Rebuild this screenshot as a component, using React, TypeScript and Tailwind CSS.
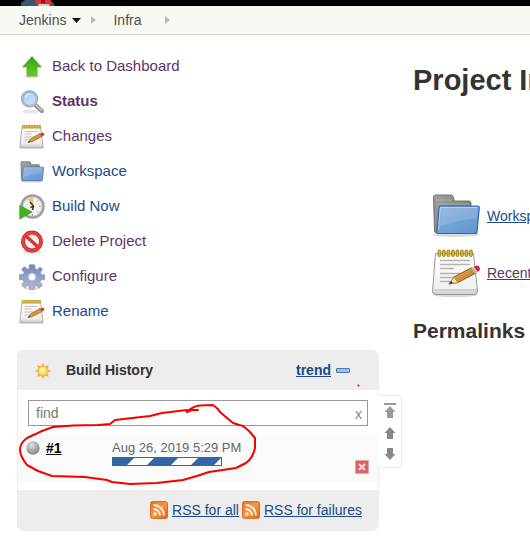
import type { ReactNode } from "react";

function ArrowUpIcon() {
  return (
    <svg viewBox="0 0 24 24" className="size-6" aria-hidden="true">
      <defs>
        <linearGradient id="green" x1="0" y1="0" x2="0" y2="1">
          <stop offset="0" stopColor="#3f9c12" />
          <stop offset="1" stopColor="#62d022" />
        </linearGradient>
      </defs>
      <ellipse cx="12" cy="21.5" rx="8" ry="1.6" fill="#000" opacity=".13" />
      <path d="M12 1.5 21.3 12H17v9H7v-9H2.7z" fill="url(#green)" stroke="#57a832" strokeWidth=".8" />
    </svg>
  );
}

function SearchIcon() {
  return (
    <svg viewBox="0 0 24 24" className="size-6" aria-hidden="true">
      <defs>
        <linearGradient id="glass" x1="0" y1="0" x2="1" y2="1">
          <stop offset="0" stopColor="#9fc4ee" />
          <stop offset="1" stopColor="#dcecfb" />
        </linearGradient>
      </defs>
      <ellipse cx="11" cy="21.5" rx="9" ry="2" fill="#000" opacity=".09" />
      <path d="m15.5 15 6.300 6" stroke="#8a8a8a" strokeWidth="4" strokeLinecap="round" />
      <path d="m15.5 14.500 6 5.800" stroke="#c9c9c9" strokeWidth="1.6" strokeLinecap="round" />
      <circle cx="9.500" cy="8.800" r="8" fill="url(#glass)" stroke="#a9abae" strokeWidth="1.400" />
      <circle cx="9.500" cy="8.800" r="6.600" fill="none" stroke="#7fa9dc" strokeWidth=".8" />
      <path d="M5.500 8.500c0-3 2-4.500 5-4.300" fill="none" stroke="#fff" strokeWidth="1.200" opacity=".6" />
    </svg>
  );
}

function SmallNotepadIcon() {
  return (
    <svg viewBox="0 0 26 26" className="size-[26px]" aria-hidden="true">
      <defs>
        <linearGradient id="smallPaper" x1="0" y1="0" x2="0" y2="1">
          <stop offset="0" stopColor="#fbfbfa" />
          <stop offset=".8" stopColor="#eeeeec" />
          <stop offset="1" stopColor="#bdbdbb" />
        </linearGradient>
      </defs>
      <path d="M3 3h18.500L24 21.500V24H1v-2.500z" fill="url(#smallPaper)" stroke="#a9a9a6" strokeWidth=".9" />
      <rect x="3" y="1" width="19" height="3.500" fill="#bfa537" />
      <path d="M3.500 2.500h18" stroke="#e0c958" strokeWidth="1.600" strokeDasharray="1.500 1" />
      <path d="M5.500 7.500h13M5.500 10h7M5.500 13h10M5.500 16h4" stroke="#c3c3c1" />
      <path d="m9 18.500 2.500-3.500L21 9.500l2 3-9.500 5z" fill="#d99536" stroke="#95611e" strokeWidth=".7" />
      <path d="m9 18.500 1.300-1.800 1 1.200z" fill="#333" />
      <path d="m21 9.500 2.500-1q2 0 2 2.500L23 12.500z" fill="#c9403a" />
    </svg>
  );
}

function NotepadIcon() {
  return (
    <svg viewBox="0 0 48 48" className="size-12 shrink-0" aria-hidden="true">
      <defs>
        <linearGradient id="paper" x1="0" y1="0" x2="0" y2="1">
          <stop offset="0" stopColor="#fdfdfd" />
          <stop offset=".85" stopColor="#f0f0ee" />
          <stop offset="1" stopColor="#c9c9c7" />
        </linearGradient>
        <linearGradient id="wood" x1="0" y1="0" x2="1" y2="1">
          <stop offset="0" stopColor="#f4c56c" />
          <stop offset="1" stopColor="#ad6410" />
        </linearGradient>
      </defs>
      <ellipse cx="23" cy="46" rx="22" ry="2" fill="#000" opacity=".16" />
      <path d="M3.500 4.500h38l4 37.500q0 3.500-3 3.500h-39q-3 0-3-3.500z" fill="url(#paper)" stroke="#9b9b98" />
      <path d="M2 41h43" stroke="#bbb" />
      <path d="M8 11.500h30M8 15.500h30M8 19.500h14M8 24.500h22M8 28.500h18M8 32.500h13" stroke="#b4b4b2" strokeWidth="1.300" />
      <g fill="#d8bd25" stroke="#8c7410" strokeWidth=".8">
        {[6, 10.5, 15, 19.5, 24, 28.5, 33, 37.5].map((x) => (
          <rect key={x} x={x} y="1" width="2.800" height="6.500" rx="1.200" />
        ))}
      </g>
      <path d="m17 35 5-7 18-9.500 4 5.500-18 9.500z" fill="url(#wood)" stroke="#87500f" strokeWidth=".9" />
      <path d="m17 35 5-7 4 5.500z" fill="#f3dfb5" stroke="#95713d" strokeWidth=".6" />
      <path d="m17 35 2-3 2 2z" fill="#34302a" />
      <path d="m39 19 3-1.500 4 5.500-3 1.500z" fill="#bdbdbd" />
      <path d="m42 17.500 2-.8c3-.7 5 3 3.300 5l-1.600 1.100z" fill="#dc2438" />
    </svg>
  );
}

function FolderIcon({ large = false }: { large?: boolean }) {
  return (
    <svg viewBox="0 0 48 48" className={large ? "size-12 shrink-0" : "size-6 shrink-0"} aria-hidden="true">
      <defs>
        <linearGradient id="folderBlue" x1="0" y1="0" x2="1" y2="1">
          <stop offset="0" stopColor="#86aedc" />
          <stop offset="1" stopColor="#6095cf" />
        </linearGradient>
        <linearGradient id="folderGrey" x1="0" y1="0" x2="1" y2="1">
          <stop offset="0" stopColor="#a0a09e" />
          <stop offset="1" stopColor="#70706e" />
        </linearGradient>
      </defs>
      <ellipse cx="24" cy="42.500" rx="23" ry="2.500" fill="#000" opacity=".15" />
      <path d="M1.500 5q0-2 2-2h16q1 0 1.500 1.500L22.500 9H37q2 0 2 2v30H5q-2.500 0-2.500-2z" fill="url(#folderGrey)" stroke="#70706e" />
      <path d="M4 8h15M4 12h33M4 16h33" stroke="#b3b3b1" strokeWidth=".8" />
      <path d="M7 15.500q0-1.500 2-1.500h36q2.500 0 2.300 2L45 39.500q0 2-2 2H6q-1.500 0-1-2z" fill="url(#folderBlue)" stroke="#3567a8" strokeWidth="1.200" />
      <path d="M8.500 15.500h37l-1 11C28 27 20 31 8 34z" fill="#fff" opacity=".15" />
      <path d="M6.500 38 8.300 15.500h37" fill="none" stroke="#b5d0ee" />
    </svg>
  );
}

function BuildIcon() {
  return (
    <svg viewBox="0 0 26 26" className="size-[26px]" aria-hidden="true">
      <circle cx="13.500" cy="12.500" r="11" fill="#e9e9ec" stroke="#9a9aaa" strokeWidth="2.400" />
      <circle cx="13.500" cy="12.500" r="9.400" fill="#f3f3ee" stroke="#cfd0da" strokeWidth="1" />
      <path d="M14.500 10.500 8 5.500q2.500-2.500 6-2.500z" fill="#e6c85e" />
      <path d="m11 8 3.500 4-1 4M14 12.500l-2.500 1" fill="none" stroke="#343434" strokeWidth="1.500" />
      <path d="M20 12.500h2M13.500 20v2M19 6.500l-1 1M19 18.500l-1-1" stroke="#999" />
      <path d="M.8 11.500 13 18 .8 25z" fill="#46b51a" stroke="#348e13" strokeWidth=".7" />
    </svg>
  );
}

function DeleteIcon() {
  return (
    <svg viewBox="0 0 24 24" className="size-6" aria-hidden="true">
      <ellipse cx="12" cy="22" rx="9" ry="1.800" fill="#000" opacity=".15" />
      <circle cx="12" cy="11.500" r="9" fill="#f5f1f0" stroke="#c52222" strokeWidth="3.800" />
      <circle cx="12" cy="11.500" r="9" fill="none" stroke="#e54343" strokeWidth="2.400" />
      <path d="m6 6 12 11" stroke="#d93434" strokeWidth="3.400" />
    </svg>
  );
}

function GearIcon() {
  return (
    <svg viewBox="0 0 26 26" className="size-[26px]" aria-hidden="true">
      <defs>
        <linearGradient id="gear" gradientUnits="userSpaceOnUse" x1="0" y1="0" x2="0" y2="26">
          <stop offset="0" stopColor="#7486b0" />
          <stop offset="1" stopColor="#b9b8de" />
        </linearGradient>
      </defs>
      <ellipse cx="13" cy="24" rx="8" ry="1.800" fill="#000" opacity=".14" />
      <path
        d="m10.300.8 5.400 0 .4 4 2 .9 3-2.600 2.400 2.400-2.300 3.300.9 2h3.500v4.800l-4 .4-.8 2 2.600 3.100-2.800 2.800-3.200-2.600-1.900.9-.4 3.600h-4.200l-.5-3.800-2-.8-3 2.500L2.600 21l2.500-3.200-.8-1.900-3.900-.4v-4.700l4-.4.8-2-2.500-3 2.800-2.700L8.600 5.300l1.500-.7z"
        fill="url(#gear)"
        stroke="#7c87ae"
        strokeWidth=".7"
      />
      <circle cx="13" cy="13" r="4.600" fill="#a9b2d6" />
      <circle cx="13" cy="13" r="3.200" fill="#fff" />
    </svg>
  );
}

function SunIcon() {
  return (
    <svg viewBox="0 0 16 16" className="size-4" aria-hidden="true">
      <g fill="#efab48">
        {[0, 45, 90, 135, 180, 225, 270, 315].map((a) => (
          <path key={a} d="M5.800 4 8 0l2.200 4z" transform={`rotate(${a} 8 8)`} />
        ))}
      </g>
      <circle cx="8" cy="8" r="5" fill="#fbd84e" stroke="#f3b04a" strokeWidth=".8" />
      <circle cx="7.300" cy="7.200" r="2.800" fill="#fff09a" />
    </svg>
  );
}

function RssIcon() {
  return (
    <svg viewBox="0 0 18 18" className="size-[18px]" aria-hidden="true">
      <defs>
        <linearGradient id="rss" x1="0" y1="0" x2="1" y2="1">
          <stop offset="0" stopColor="#e77424" />
          <stop offset=".5" stopColor="#f7953c" />
          <stop offset="1" stopColor="#d9631b" />
        </linearGradient>
      </defs>
      <rect x=".5" y=".5" width="17" height="17" rx="2" fill="url(#rss)" stroke="#d96d2a" />
      <circle cx="5" cy="13" r="1.700" fill="#fdeee0" />
      <path d="M3.500 8a6.500 6.500 0 0 1 6.500 6.500M3.500 4a10.500 10.500 0 0 1 10.500 10.500" fill="none" stroke="#fdeee0" strokeWidth="2" />
    </svg>
  );
}

function StatusBall() {
  return (
    <svg viewBox="0 0 14 14" className="size-[14px]" aria-hidden="true">
      <defs>
        <radialGradient id="ball" cx=".4" cy=".3" r=".7">
          <stop offset="0" stopColor="#e4e4e4" />
          <stop offset=".5" stopColor="#b0b0b0" />
          <stop offset="1" stopColor="#868686" />
        </radialGradient>
      </defs>
      <circle cx="7" cy="7" r="6.700" fill="url(#ball)" />
    </svg>
  );
}

function ProgressBar() {
  return (
    <svg viewBox="0 0 110 9" className="block h-[9px] w-[110px]" role="img" aria-label="Build in progress">
      <rect width="110" height="9" fill="#3465a4" />
      <path d="M22 1h20l-7 7H15zM66 1h20l-7 7H59zM109 1v7h-7z" fill="#fff" />
    </svg>
  );
}

function Separator() {
  return (
    <svg viewBox="0 0 6 8" className="h-2 w-[6px]" aria-hidden="true">
      <path d="M0 0 5 4 0 8z" fill="#b9bbb7" />
    </svg>
  );
}

function ButlerLogo() {
  return (
    <svg viewBox="0 0 36 6" className="ml-5 h-[6px] w-9" aria-hidden="true">
      <path d="M1 6V3l4-3h24l4 2 2 4z" fill="#3b566b" />
      <path d="M17 4h13l-1 2H19z" fill="#c9ced6" />
      <path d="M15 0h6l2 1 2-1h6v5l-5-2h-4l-5 2z" fill="#e0302c" />
      <path d="M21 0h4v3h-4z" fill="#8d1a1a" />
    </svg>
  );
}

type Task = { label: string; icon: ReactNode; visited?: boolean; current?: boolean };

const tasks: Task[] = [
  { label: "Back to Dashboard", icon: <ArrowUpIcon />, visited: true },
  { label: "Status", icon: <SearchIcon />, visited: true, current: true },
  { label: "Changes", icon: <SmallNotepadIcon />, visited: true },
  { label: "Workspace", icon: <FolderIcon /> },
  { label: "Build Now", icon: <BuildIcon /> },
  { label: "Delete Project", icon: <DeleteIcon />, visited: true },
  { label: "Configure", icon: <GearIcon />, visited: true },
  { label: "Rename", icon: <SmallNotepadIcon /> },
];

function TaskList() {
  return (
    <ul className="pt-[14px]">
      {tasks.map((t) => (
        <li key={t.label}>
          <a
            href="#"
            aria-current={t.current ? "page" : undefined}
            className={`flex h-[35px] items-center gap-[7px] text-[15px] ${t.visited ? "text-[#5c3566]" : "text-[#204a87]"} ${t.current ? "font-bold" : ""}`}
          >
            <span className="flex w-[26px] justify-center">{t.icon}</span>
            {t.label}
          </a>
        </li>
      ))}
    </ul>
  );
}

function PageButtons() {
  return (
    <div className="absolute top-[44px] left-full flex h-[73px] w-6 flex-col items-center justify-between rounded-r border border-l-0 border-[#ececec] bg-white py-[7px]">
      <button type="button" aria-label="Newest builds">
        <svg viewBox="0 0 12 15" className="block h-[15px] w-3">
          <path d="M0 0h12v2H0zM6 3l5.500 6H9v6H3V9H.5z" fill="#999" />
        </svg>
      </button>
      <button type="button" aria-label="Newer builds">
        <svg viewBox="0 0 12 12" className="block size-3">
          <path d="m6 0 5.500 6H9v6H3V6H.5z" fill="#888" />
        </svg>
      </button>
      <button type="button" aria-label="Older builds">
        <svg viewBox="0 0 12 12" className="block size-3">
          <path d="M6 12 .5 6H3V0h6v6h2.500z" fill="#888" />
        </svg>
      </button>
    </div>
  );
}

function BuildHistory() {
  return (
    <section className="relative -ml-[2px] mt-[21px] rounded-md border border-[#ececec] bg-white">
      <header className="flex h-[39px] items-center rounded-t-[5px] bg-[#ededed] pr-7 pl-[17px]">
        <SunIcon />
        <h2 className="ml-[15px] flex-1 text-[14px] font-bold text-[#333]">Build History</h2>
        <a href="#" className="text-[14px] font-bold text-[#204a87] underline">trend</a>
        <button type="button" aria-label="Collapse build history" className="ml-[5px] h-[5px] w-[14px] rounded-[1px] border border-[#4a78b5] bg-[#a4bfdf]" />
      </header>
      <div className="relative mx-[10px] mt-[10px] mb-[9px]">
        <input aria-label="Find builds" placeholder="find" className="block h-[26px] w-full border border-[#999] bg-white px-[7px] text-[14px] text-[#333] placeholder:text-[#777] outline-none" />
        <button type="button" aria-label="Clear search" className="absolute top-1 right-[6px] text-[14px] leading-[20px] text-[#888]">x</button>
      </div>
      <div className="flex h-12 bg-[#fafafa] pt-[3px] pr-[9px] pl-2">
        <div className="flex h-5 w-[86px] items-center gap-[6px]">
          <StatusBall />
          <a href="#" className="text-[14px] font-bold text-black underline">#1</a>
        </div>
        <div className="flex-1 text-[13px] leading-[19px] text-[#666]">
          <time dateTime="2019-08-26T17:29" className="block">Aug 26, 2019 5:29 PM</time>
          <ProgressBar />
        </div>
        <button type="button" aria-label="Cancel build" className="mb-[9px] size-[14px] self-end rounded-[1px] border border-[#e8a0a0] bg-[#d96466]">
          <svg viewBox="0 0 12 12" className="block size-3">
            <path d="m3 3 6 6M9 3 3 9" stroke="#f7dcdc" strokeWidth="2" />
          </svg>
        </button>
      </div>
      <footer className="mt-[7px] flex h-10 items-center justify-end gap-[3px] rounded-b-[5px] bg-[#ededed] pr-4 text-[14px] text-[#204a87]">
        <a href="#" className="flex items-center gap-1"><RssIcon /><span className="underline">RSS for all</span></a>
        <a href="#" className="flex items-center gap-1"><RssIcon /><span className="underline">RSS for failures</span></a>
      </footer>
      <PageButtons />
    </section>
  );
}

function Annotation() {
  return (
    <svg viewBox="0 350 380 180" className="pointer-events-none absolute top-[350px] left-0 h-[180px] w-[380px]" aria-hidden="true">
      <path
        d="M187 412 192 410 198 410M187 412Q193 406 200 405.500L212 405Q216 406 220 412L233 423 243 426 249 431 255 438V448Q253 458 246 463L236 468 209 472 197 476 183 480 157 483 130 484 112 482 107 480 85 477 52 476 38 471 27 465Q20 456 20 450Q20 443 27 438L42 431 53 427 73 425.500 98 425 110 424 115 420 150 416 162 413 187 410"
        fill="none"
        stroke="#f50000"
        strokeWidth="2"
        strokeLinecap="round"
        strokeLinejoin="round"
      />
      <circle cx="358.500" cy="385.500" r="1" fill="#f50000" />
    </svg>
  );
}

export default function App() {
  return (
    <div className="relative overflow-hidden bg-white pb-[11px] font-['Liberation_Sans',Arial,sans-serif] text-[#333]">
      <header className="h-[6px] bg-black"><ButlerLogo /></header>
      <nav aria-label="Breadcrumb" className="flex h-[29px] items-center border-b border-[#d3d7cf] bg-[#f6faf2] pl-[19px] text-[14px] text-[#4d4d4d]">
        <a href="#">Jenkins</a>
        <button type="button" aria-label="Jenkins menu" className="mr-[10px] ml-[6px]">
          <svg viewBox="0 0 9 5" className="block h-[5px] w-[9px]"><path d="M0 0h9L4.500 5z" fill="#111" /></svg>
        </button>
        <Separator />
        <a href="#" className="mr-6 ml-4">Infra</a>
        <Separator />
      </nav>
      <div className="flex">
        <aside className="w-[379px] shrink-0 pl-[19px]">
          <TaskList />
          <BuildHistory />
        </aside>
        <main className="min-w-0 flex-1 overflow-hidden pt-7 pl-[34px] whitespace-nowrap">
          <h1 className="text-[29px] leading-[34px] font-bold">Project Infra</h1>
          <div className="mt-[95px] ml-[19px] flex flex-col gap-[9px] text-[14px]">
            <a href="#" className="flex items-center gap-[7px] text-[#204a87]"><FolderIcon large /><span className="underline">Workspace</span></a>
            <a href="#" className="flex items-center gap-[7px] text-[#5c3566]"><NotepadIcon /><span className="underline">Recent Changes</span></a>
          </div>
          <h2 className="mt-[22px] text-[21px] leading-6 font-bold">Permalinks</h2>
        </main>
      </div>
      <Annotation />
    </div>
  );
}
